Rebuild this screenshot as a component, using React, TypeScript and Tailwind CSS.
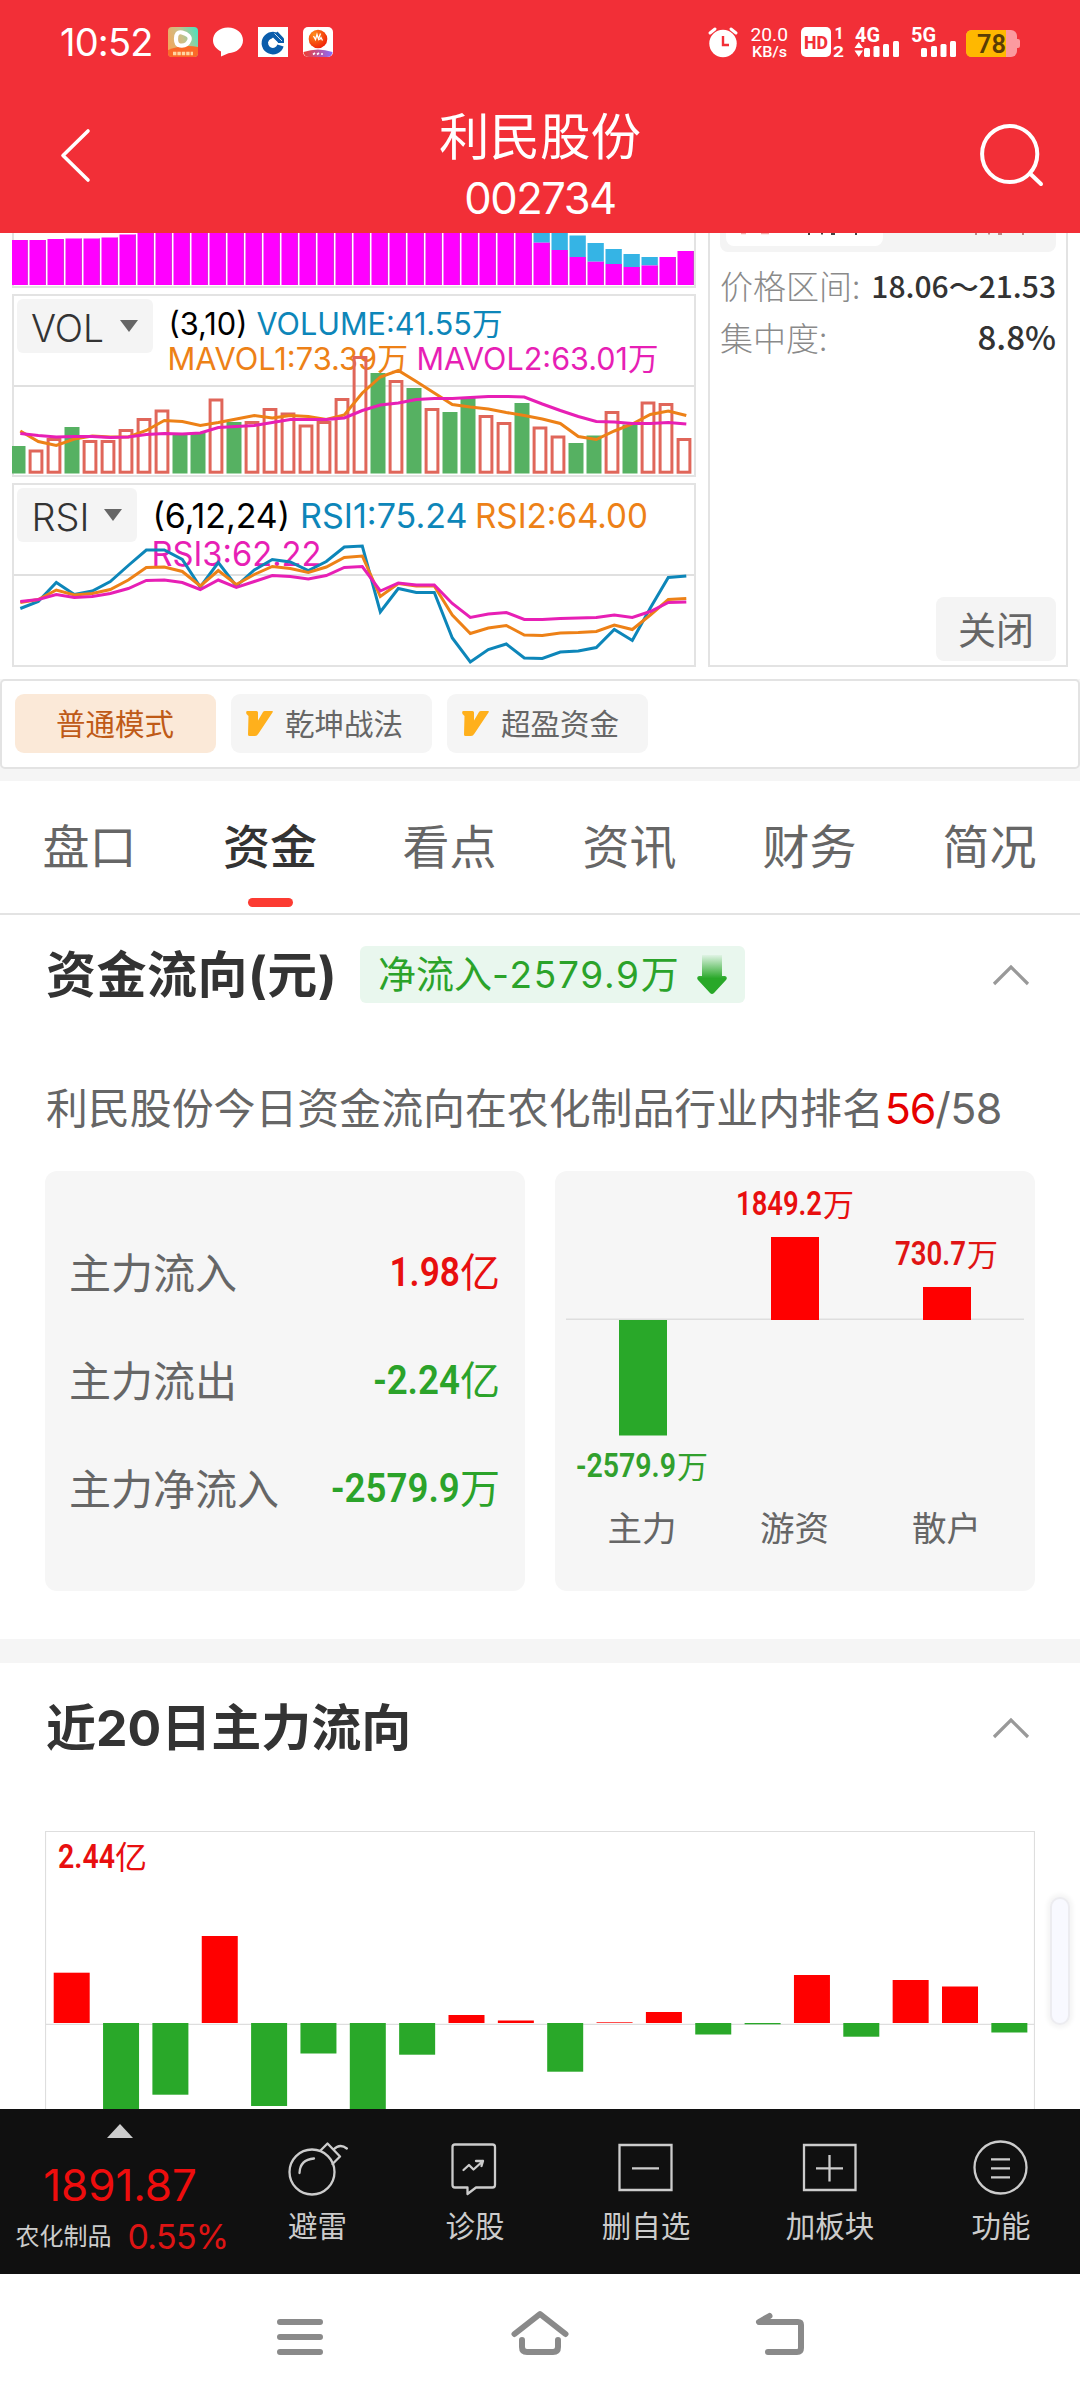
import React from "react";

const PITCH = 18;

/* Position chips histogram: [lower top, upper top] */
const CHIPS: [number, number?][] = [
  [240], [240], [239], [238.5], [238.5], [237.5], [234.5],
  ...Array.from({ length: 22 }, () => [230] as [number]),
  [242.7, 230], [250, 230], [257, 235.5], [261.7, 243], [264, 249], [267, 254], [265.5, 257], [257], [251],
];

const VOL_BARS: [string, number][] = [
  ["g", 446], ["r", 449.5], ["r", 438], ["g", 427], ["r", 440], ["r", 440], ["r", 429], ["r", 418], ["r", 409.5],
  ["g", 433], ["g", 432], ["r", 398.5], ["g", 422], ["r", 421], ["r", 408], ["r", 412.5], ["r", 424.5], ["r", 421],
  ["r", 398], ["r", 356], ["g", 373], ["r", 380], ["g", 388], ["r", 408], ["g", 412], ["g", 398], ["r", 415],
  ["r", 422], ["g", 403], ["r", 426.5], ["r", 435.5], ["g", 443], ["g", 435.5], ["r", 411], ["g", 424.5],
  ["r", 401.5], ["r", 403], ["r", 438],
];

const MA1 = [431, 441.5, 445.5, 439, 436, 437, 437, 430.5, 420.5, 421.5, 425.5, 422.5, 419, 415.5, 418, 415.5, 416.5, 419.5, 415, 393, 377, 370.5, 381.5, 393, 404.5, 407, 409, 412.5, 415.5, 419, 423.5, 436.5, 439.5, 431, 424, 414.5, 411, 415.5];
const MA2 = [433.5, 435.5, 437, 436.5, 436.5, 437.5, 437, 434.5, 433.5, 434, 433, 427.5, 426.5, 425.5, 422.5, 419.5, 419.5, 419.5, 418, 410.5, 405, 403, 399.5, 398.5, 398.5, 397.5, 396.5, 396.5, 397, 404, 410.5, 416.5, 421.5, 422, 423.5, 423.5, 422.5, 424];
const RSI1 = [608.5, 601.5, 582.5, 594.5, 591, 581.5, 565.5, 550, 550, 559.5, 587, 562.5, 586, 570, 559.5, 562, 570.5, 561.5, 547, 546, 612, 588.5, 592.5, 592.5, 638, 662, 649.5, 644, 658, 658.5, 652, 651, 647.5, 629.5, 640.5, 608, 577.5, 576];
const RSI2 = [602.5, 599.5, 590, 595, 593.5, 589.5, 580, 567.5, 567, 571.5, 586, 570.5, 584.5, 574.5, 566.5, 568.5, 572.5, 567, 557.5, 556, 596.5, 583.5, 586, 586, 615, 633.5, 628, 625.5, 635, 635.5, 633, 632.5, 631.5, 625, 629.5, 615, 599.5, 598.5];
const RSI3 = [601.5, 599.5, 594.5, 597.5, 596.5, 593.5, 588.5, 580.5, 580, 582.5, 589.5, 580, 587.5, 581.5, 575.5, 576.5, 579, 575.5, 567.5, 566.5, 591, 583, 585, 585, 603.5, 617.5, 614, 612.5, 619.5, 619.5, 618.5, 618, 617.5, 615, 617.5, 611.5, 602.5, 602];

const line = (ys: number[]) => ys.map((y, i) => `${20.3 + i * PITCH},${y}`).join(" ");

const BLUE = "#0d86b9";
const ORANGE = "#ed8117";
const PINK = "#e71fb5";

function StatusBar() {
  return (
    <div className="flex h-[84px] items-center pl-[60px] pr-[60px]">
      <span className="w-[108px] text-[38px] leading-none tracking-[-0.8px] text-white">10:52</span>
      <div className="flex gap-[15px]">
        <svg width="30" height="30" viewBox="0 0 30 30">
          <defs>
            <linearGradient id="vid" x1="0" y1="0.6" x2="1" y2="0.2">
              <stop offset="0" stopColor="#f3a85c" />
              <stop offset="0.5" stopColor="#c9c08a" />
              <stop offset="1" stopColor="#4fe0bd" />
            </linearGradient>
          </defs>
          <rect width="30" height="30" rx="4" fill="url(#vid)" />
          <path d="M0 23Q15 17 30 20V26Q30 30 26 30H4Q0 30 0 26Z" fill="#fb6a28" />
          <path d="M8 12Q8 4 14 5.5Q23 8 21.5 13Q19 19.5 12 18.5Q8 18 8 12Z" fill="none" stroke="#fff" strokeWidth="4.2" />
          <path d="M5 26.5H25" stroke="#ffd6a0" strokeWidth="3.4" strokeDasharray="3.4 1" />
        </svg>
        <svg width="30" height="30" viewBox="0 0 30 30">
          <path d="M15 0.5C23.5 0.5 30 6 30 13.3S23.5 26 15.5 26.2L8 29.6V24.4C3 22 0 18 0 13.3C0 6 6.5 0.5 15 0.5Z" fill="#fff" />
        </svg>
        <svg width="30" height="30" viewBox="0 0 30 30">
          <rect width="30" height="30" fill="#fff" />
          <path d="M20 10A8 8 0 1 0 22.500 18.500" fill="none" stroke="#0a5cab" strokeWidth="6.500" />
          <path d="M14 10.500L19.500 4.500L26 11.500V16H20Z" fill="#0a5cab" />
          <path d="M15 10.500L20 15.500L15 20.500L10 15.500Z" fill="#fff" />
          <path d="M16.500 6.500L24 14" stroke="#fff" strokeWidth="0.800" />
        </svg>
        <svg width="30" height="30" viewBox="0 0 30 30">
          <defs>
            <radialGradient id="ball" cx="0.3" cy="0.25" r="0.9">
              <stop offset="0" stopColor="#ff8c1a" />
              <stop offset="1" stopColor="#ee1505" />
            </radialGradient>
            <linearGradient id="rib">
              <stop offset="0" stopColor="#f03b2e" />
              <stop offset="1" stopColor="#8a6cff" />
            </linearGradient>
          </defs>
          <rect width="30" height="30" rx="5" fill="#fff" />
          <circle cx="15" cy="12" r="9.3" fill="url(#ball)" />
          <path d="M0.5 25Q15 20 29.5 25Q29 30 24 30H6Q1 30 0.5 25Z" fill="url(#rib)" />
          <path d="M10.5 9L12.5 12.5L14 7.5L15.5 12L17.5 6.5M16.5 13L18 10.500L19.500 13.500" fill="none" stroke="#fff" strokeWidth="1.3" />
          <path d="M10 27.500L12 26M14 27.500L16 26M18 27L20 27" stroke="#fff" strokeWidth="1.6" />
        </svg>
      </div>
      <svg className="ml-auto" width="314" height="54" viewBox="706 15 314 54" fontFamily='Roboto, "Noto Sans CJK SC", sans-serif' fill="#fff">
        <circle cx="723" cy="43.500" r="13.700" />
        <path d="M710 33L715 29M736 33L731 29" stroke="#fff" strokeWidth="3" strokeLinecap="round" />
        <path d="M723 36V45H729" fill="none" stroke="#f22f37" strokeWidth="2.400" />
        <text x="750.500" y="41" fontSize="19" textLength="37.500" lengthAdjust="spacingAndGlyphs">20.0</text>
        <text x="752" y="56.500" fontSize="15.500" fontWeight="500" textLength="35" lengthAdjust="spacingAndGlyphs">KB/s</text>
        <rect x="801" y="27" width="30" height="30" rx="5" />
        <text x="804" y="49" fontSize="19" fontWeight="800" fill="#f22f37" textLength="24" lengthAdjust="spacingAndGlyphs">HD</text>
        <text x="834.500" y="38.500" fontSize="16" fontWeight="700">1</text>
        <text x="833" y="57" fontSize="15.500" fontWeight="700" textLength="11" lengthAdjust="spacingAndGlyphs">2</text>
        <text x="855" y="42" fontSize="20" fontWeight="700" textLength="25" lengthAdjust="spacingAndGlyphs">4G</text>
        <path d="M854.500 48L858.800 42L863 48ZM854.500 50.500L858.800 57L863 50.500Z" />
        <rect x="864" y="48" width="6" height="9" rx="1.500" />
        <rect x="873.500" y="46" width="6" height="11" rx="1.500" />
        <rect x="883" y="44" width="6" height="13" rx="1.500" />
        <rect x="893" y="41" width="6" height="16" rx="1.500" />
        <text x="911" y="42" fontSize="20" fontWeight="700" textLength="25" lengthAdjust="spacingAndGlyphs">5G</text>
        <rect x="921" y="48" width="6" height="9" rx="1.500" />
        <rect x="931" y="46" width="6" height="11" rx="1.500" />
        <rect x="940.500" y="44" width="6" height="13" rx="1.500" />
        <rect x="950" y="41" width="6" height="16" rx="1.500" />
        <rect x="966" y="30" width="51" height="27" rx="6" fill="#fb9a9f" />
        <rect x="1015" y="39" width="5" height="9" rx="2" fill="#fb9a9f" />
        <path d="M972 30H1006V57H972Q966 57 966 51V36Q966 30 972 30Z" fill="#ffb800" />
        <text x="977" y="53" fontSize="25" fontWeight="600" fill="#5a3d05" textLength="29" lengthAdjust="spacingAndGlyphs">78</text>
      </svg>
    </div>
  );
}

function Header() {
  return (
    <header className="h-[233px] bg-[#f22f37]">
      <StatusBar />
      <div className="grid h-[149px] grid-cols-3">
        <svg className="ml-[34px] mt-[40px]" width="60" height="64" viewBox="34 124 60 64">
          <path d="M88 131L63 155.500L88 180" fill="none" stroke="#fff" strokeWidth="3.600" strokeLinecap="round" strokeLinejoin="round" />
        </svg>
        <div className="flex flex-col items-center text-white">
          <h1 className="mt-[28px] text-[50.500px] leading-[50px]">利民股份</h1>
          <p className="mt-[11px] text-[43.500px] leading-[50px] tracking-[-1.500px]">002734</p>
        </div>
        <svg className="ml-auto mr-[28px] mt-[40px]" width="76" height="66" viewBox="976 124 76 66">
          <ellipse cx="1009.700" cy="154" rx="27.600" ry="28" fill="none" stroke="#fff" strokeWidth="4" />
          <path d="M1030 173.500L1041 184" stroke="#fff" strokeWidth="4" strokeLinecap="round" />
        </svg>
      </div>
    </header>
  );
}

function IndicatorCharts() {
  return (
    <svg className="shrink-0" width="708" height="446" viewBox="0 233 708 446" fontFamily='Inter, "Noto Sans CJK SC", sans-serif'>
      <path d="M13 233V287H695V233" fill="none" stroke="#e3e3e3" strokeWidth="2" />
      {CHIPS.map(([lo, hi], i) => {
        const x = Math.max(12, 11.500 + i * PITCH);
        const w = i === 0 ? 15.700 : 16.300;
        return (
          <g key={i}>
            {hi !== undefined && <rect x={x} y={hi} width={w} height={lo - hi} fill="#35b4e5" />}
            <rect x={x} y={lo} width={w} height={285 - lo} fill="#ff00ff" />
            <path d={`M${x + w - 0.400} ${Math.max(lo, 233)}V285`} stroke="#c934c9" strokeWidth="0.800" />
          </g>
        );
      })}

      <rect x="13" y="295" width="682" height="181" fill="none" stroke="#e3e3e3" strokeWidth="2" />
      <path d="M14 386H694" stroke="#e0e0e0" strokeWidth="2" />
      <rect x="17" y="299" width="136" height="54" rx="6" fill="#f4f4f4" />
      <text x="31" y="341.500" fontSize="37.500" fontWeight="300" fill="#333" textLength="73" lengthAdjust="spacingAndGlyphs">VOL</text>
      <path d="M120 320H138L129 332Z" fill="#666" />
      <g fontSize="31">
        <text x="168.500" y="335" fill="#000" textLength="79" lengthAdjust="spacingAndGlyphs">(3,10)</text>
        <text x="256.500" y="335" fill={BLUE} textLength="246" lengthAdjust="spacingAndGlyphs">VOLUME:41.55万</text>
        <text x="167.500" y="370" fill={ORANGE} textLength="240.500" lengthAdjust="spacingAndGlyphs">MAVOL1:73.39万</text>
        <text x="416.500" y="370" fill={PINK} textLength="242" lengthAdjust="spacingAndGlyphs">MAVOL2:63.01万</text>
      </g>
      {VOL_BARS.map(([c, y], i) => {
        const x = 28.500 + (i - 1) * PITCH;
        if (c === "g") {
          const left = Math.max(12, x);
          return <rect key={i} x={left} y={y} width={x + 15 - left} height={473.500 - y} fill="#56b162" />;
        }
        return <rect key={i} x={x + 1.600} y={y + 1.500} width="11.800" height={470.700 - y} fill="none" stroke="#e0665a" strokeWidth="3" />;
      })}
      <polyline points={line(MA1)} fill="none" stroke={ORANGE} strokeWidth="3" />
      <polyline points={line(MA2)} fill="none" stroke={PINK} strokeWidth="3" />

      <rect x="13" y="484" width="682" height="182" fill="none" stroke="#e3e3e3" strokeWidth="2" />
      <path d="M14 575H694" stroke="#e0e0e0" strokeWidth="2" />
      <rect x="17" y="488" width="120" height="54" rx="6" fill="#f4f4f4" />
      <text x="31.500" y="530.500" fontSize="37.500" fontWeight="300" fill="#333" textLength="58" lengthAdjust="spacingAndGlyphs">RSI</text>
      <path d="M104 509H122L113 521Z" fill="#666" />
      <g fontSize="33.500">
        <text x="152.500" y="527.500" fill="#000" textLength="137.500" lengthAdjust="spacingAndGlyphs">(6,12,24)</text>
        <text x="300" y="527.500" fill={BLUE} textLength="167.500" lengthAdjust="spacingAndGlyphs">RSI1:75.24</text>
        <text x="475" y="527.500" fill={ORANGE} textLength="173" lengthAdjust="spacingAndGlyphs">RSI2:64.00</text>
        <text x="151.500" y="566" fill={PINK} textLength="170" lengthAdjust="spacingAndGlyphs">RSI3:62.22</text>
      </g>
      <polyline points={line(RSI1)} fill="none" stroke={BLUE} strokeWidth="3" />
      <polyline points={line(RSI2)} fill="none" stroke={ORANGE} strokeWidth="3" />
      <polyline points={line(RSI3)} fill="none" stroke={PINK} strokeWidth="3" />
    </svg>
  );
}

function ChipPanel() {
  return (
    <aside className="flex h-[434px] w-[360px] flex-col border-x-2 border-b-2 border-[#e3e3e3] px-[10px] font-['Noto_Sans_CJK_SC',sans-serif]">
      <div className="h-[19px] rounded-b-[8px] bg-[#f4f4f4] px-[6px]">
        <div className="h-[13px] w-[157px] rounded-b-[8px] bg-white">
          <svg width="310" height="3" viewBox="0 0 310 3">
            <path d="M15 0.500H20M35 0.500H43" stroke="#f0b0b0" strokeWidth="1.500" />
            <path d="M82 1H84M95 0.500H97M105 1H109M129 1H131" stroke="#444" strokeWidth="2" />
            <path d="M249 1H251M262 0.500H264M272 1H276M296 1H298" stroke="#b88" strokeWidth="2" />
          </svg>
        </div>
      </div>
      <div className="mt-[10px] flex h-[48px] items-center justify-between whitespace-nowrap">
        <span className="text-[33px] font-light text-[#8a8a8a]">价格区间:</span>
        <span className="-mt-[2px] text-[30px] font-medium text-[#333]">18.06～21.53</span>
      </div>
      <div className="mt-[4px] flex h-[48px] items-center justify-between">
        <span className="text-[33px] font-light text-[#8a8a8a]">集中度:</span>
        <span className="-mt-[2px] text-[33px] font-medium text-[#333]">8.8%</span>
      </div>
      <button className="mb-[4px] ml-auto mt-auto h-[64px] w-[120px] rounded-[8px] bg-[#f4f4f4] pb-[2px] text-[38px] leading-none text-[#666]">关闭</button>
    </aside>
  );
}

function VipIcon() {
  return (
    <svg width="27" height="25" viewBox="0 0 27 25">
      <path d="M1.500 0H10.500Q12 0 12 1.500V9.500L17 1Q17.600 0 19 0H26Q27.500 0 26.500 1.500L12.500 22.500Q11 25 9 25H3.500Q2 25 2 23.500L2.500 5L0.500 3Q-0.500 0 1.500 0Z" fill="#ffb01c" />
    </svg>
  );
}

function ModeBar() {
  return (
    <div className="bg-[#f5f5f5] pb-[12px]">
      <div className="flex h-[90px] gap-[15px] rounded-[5px] border-2 border-[#e3e3e3] bg-white px-[13px] pt-[13px] text-[29.500px]">
        <button className="h-[59px] w-[201px] rounded-[9px] bg-[#fbe9d8] pr-[1px] pt-[2px] text-[#bf5a17]">普通模式</button>
        {["乾坤战法", "超盈资金"].map((t) => (
          <button key={t} className="flex h-[59px] w-[201px] items-center gap-[12px] rounded-[9px] bg-[#f5f5f5] pl-[15px] text-[#666]">
            <VipIcon />
            <span className="pt-[2px]">{t}</span>
          </button>
        ))}
      </div>
    </div>
  );
}

const TABS = ["盘口", "资金", "看点", "资讯", "财务", "简况"];

function Tabs() {
  return (
    <nav className="grid h-[134px] grid-cols-6 border-b-2 border-[#e3e3e3]">
      {TABS.map((t) =>
        t === "资金" ? (
          <div key={t} className="flex flex-col items-center">
            <span className="mt-[31px] text-[47px] font-medium leading-[70px] text-[#333]">{t}</span>
            <span className="mt-[16px] h-[9px] w-[45px] rounded-[5px] bg-[#fc3b32]" />
          </div>
        ) : (
          <div key={t} className="flex flex-col items-center pr-px">
            <span className="mt-[31px] text-[47px] leading-[70px] text-[#666]">{t}</span>
          </div>
        ),
      )}
    </nav>
  );
}

function Collapse() {
  return (
    <svg className="ml-auto" width="38" height="22" viewBox="0 0 38 22">
      <path d="M2 20L19 3L36 20" fill="none" stroke="#999" strokeWidth="3.200" />
    </svg>
  );
}

function FlowRow({ label, digits, unit, tone }: { label: string; digits: string; unit: string; tone: "up" | "down" }) {
  return (
    <div className="flex h-[108px] items-center justify-between">
      <span className="text-[42px] text-[#666]">{label}</span>
      <span className={tone === "up" ? "flex items-center text-[#e80f0f]" : "flex items-center text-[#2ba32a]"}>
        <span
          className={
            tone === "up"
              ? "inline-block origin-right scale-x-[0.86] font-['Roboto'] text-[41px] font-semibold"
              : "inline-block origin-right scale-x-[0.895] font-['Roboto'] text-[41px] font-semibold"
          }
        >
          {digits}
        </span>
        <span className="text-[40px]">{unit}</span>
      </span>
    </div>
  );
}

function MoneySplit() {
  const bars = [
    { x: 619, y: 1320, h: 115.500, fill: "#29a829", text: "#31a02d", name: "主力", digits: "-2579.9", dx: 576, dw: 100, dy: 1477, nx: 642 },
    { x: 771, y: 1237, h: 83, fill: "#ff0000", text: "#e80f0f", name: "游资", digits: "1849.2", dx: 736, dw: 86, dy: 1215, nx: 794.500 },
    { x: 923, y: 1287, h: 33, fill: "#ff0000", text: "#e01414", name: "散户", digits: "730.7", dx: 895, dw: 71, dy: 1265, nx: 946.500 },
  ];
  return (
    <svg className="rounded-[12px] bg-[#f6f6f6]" width="480" height="420" viewBox="555 1171 480 420" fontFamily='Roboto, "Noto Sans CJK SC", sans-serif'>
      <path d="M566 1319.300H1024" stroke="#dedede" strokeWidth="1.500" />
      {bars.map((b) => (
        <g key={b.name}>
          <rect x={b.x} y={b.y} width="48" height={b.h} fill={b.fill} />
          <text x={b.dx} y={b.dy} fontSize="34" fontWeight="600" fill={b.text} textLength={b.dw} lengthAdjust="spacingAndGlyphs">{b.digits}</text>
          <text x={b.dx + b.dw + 1} y={b.dy + 0.500} fontSize="31" fill={b.text}>万</text>
          <text x={b.nx} y="1540.500" fontSize="34.500" fill="#666" textAnchor="middle">{b.name}</text>
        </g>
      ))}
    </svg>
  );
}

function MoneyFlow() {
  return (
    <section className="h-[724px] px-[45px]">
      <div className="flex h-[119px] items-center pl-px pr-[5px]">
        <h2 className="w-[288px] whitespace-nowrap text-[50px] font-bold leading-[60px] tracking-[0.500px] text-[#333]">资金流向(元)</h2>
        <div className="ml-[26px] flex h-[57px] w-[385px] items-center rounded-[6px] bg-[#e9f7ee] pl-[18px] text-[#2ba32a]">
          <span className="-mt-[2px] whitespace-nowrap text-[38px] leading-none">
            净流入<span className="font-['Inter'] text-[37px] tracking-[1.700px]">-2579.9</span>万
          </span>
          <svg className="ml-auto mr-[18px]" width="30" height="40" viewBox="0 0 30 40">
            <defs>
              <linearGradient id="fall" x1="0" y1="0" x2="0" y2="1">
                <stop offset="0" stopColor="#29a829" stopOpacity="0.050" />
                <stop offset="0.600" stopColor="#29a829" />
              </linearGradient>
            </defs>
            <path d="M5 0H25V21H28Q31 22 29 25L17 38Q15 40 13 38L1 25Q-1 22 2 21H5Z" fill="url(#fall)" />
          </svg>
        </div>
        <Collapse />
      </div>
      <p className="mt-[44px] flex h-[60px] items-baseline whitespace-nowrap pl-px text-[41.900px] leading-[60px] text-[#666]">
        利民股份今日资金流向在农化制品行业内排名
        <span className="pl-px font-['Inter'] text-[43px] tracking-[-1.200px] text-[#e60000]">56</span>
        <span className="font-['Inter'] text-[43px] tracking-[-0.500px]">/58</span>
      </p>
      <div className="mt-[33px] flex gap-[30px]">
        <div className="h-[420px] w-[480px] rounded-[12px] bg-[#f6f6f6] pl-[24px] pr-[25px] pt-[48px]">
          <FlowRow label="主力流入" digits="1.98" unit="亿" tone="up" />
          <FlowRow label="主力流出" digits="-2.24" unit="亿" tone="down" />
          <FlowRow label="主力净流入" digits="-2579.9" unit="万" tone="down" />
        </div>
        <MoneySplit />
      </div>
    </section>
  );
}

/* End of each daily bar, measured from the zero line at 2023 */
const DAILY = [1972.700, 2120, 2094.700, 1936, 2106, 2053.500, 2120, 2054.700, 2015, 2020.500, 2071.700, 2022.300, 2012, 2034.500, 2024.300, 1975, 2036.700, 1980, 1986.500, 2032.500];

function DailyFlow() {
  return (
    <section className="relative h-[446px] overflow-hidden">
      <div className="flex h-[130px] items-center pl-[46px] pr-[50px]">
        <h2 className="text-[50px] font-bold leading-[60px] text-[#333]">近20日主力流向</h2>
        <Collapse />
      </div>
      <svg className="ml-[45px] mt-[38px]" width="990" height="278" viewBox="45 1831 990 278" fontFamily='Roboto, "Noto Sans CJK SC", sans-serif'>
        <path d="M45.500 2109V1831.500H1034.500V2109M46 2024.300H1034" fill="none" stroke="#dedede" strokeWidth="1.200" />
        <text x="58" y="1868" fontSize="34" fontWeight="600" fill="#e80f0f" textLength="57" lengthAdjust="spacingAndGlyphs">2.44</text>
        <text x="115" y="1868.500" fontSize="32" fill="#e80f0f">亿</text>
        {DAILY.map((y, i) => (
          <rect key={i} x={53.700 + i * 49.350} y={Math.min(y, 2023)} width="36" height={Math.abs(y - 2023)} fill={y < 2023 ? "#ff0000" : "#29a829"} />
        ))}
      </svg>
      <div className="absolute left-[1050px] top-[234px] h-[128px] w-[20px] rounded-full border-2 border-[#ececf0] bg-[#f8f9ff] shadow-[0_0_4px_3px_#f5f5f5]" />
    </section>
  );
}

function ActionBar() {
  const item = "flex flex-col items-center pt-[27px] text-[29.500px] leading-[40px] text-[#ccc]";
  return (
    <footer className="flex h-[165px] bg-[#101010]">
      <div className="flex w-[240px] flex-col items-center">
        <svg className="mt-[15px]" width="26" height="14" viewBox="0 0 26 14">
          <path d="M13 0L26 14H0Z" fill="#ccc" />
        </svg>
        <span className="mt-[22px] font-['Inter'] text-[44px] leading-[50px] tracking-[-0.100px] text-[#ee0d0d]">1891.87</span>
        <span className="ml-[4px] mt-[3px] flex items-center gap-[16px]">
          <span className="text-[24px] leading-[48px] text-[#ccc]">农化制品</span>
          <span className="font-['Inter'] text-[34px] leading-[48px] tracking-[-0.700px] text-[#dd1414]">0.55%</span>
        </span>
      </div>
      <div className={`${item} w-[154px]`}>
        <svg width="62" height="64" viewBox="286 2136 62 64" fill="none" stroke="#ccc" strokeWidth="2.300" strokeLinejoin="round" strokeLinecap="round">
          <circle cx="312" cy="2172" r="22.500" />
          <path d="M320 2151L327.500 2143.500L340 2156.500L332.500 2164M333.500 2149.500Q340 2143 346.800 2148.500M299.500 2173Q300 2159.500 314 2158.500" />
        </svg>
        <span className="ml-px mt-[6px]">避雷</span>
      </div>
      <div className={`${item} w-[162px]`}>
        <svg width="62" height="64" viewBox="444 2136 62 64" fill="none" stroke="#ccc" strokeWidth="2.300" strokeLinejoin="round" strokeLinecap="round">
          <path d="M455 2144.500H492.500Q495 2144.500 495 2147V2185Q495 2187.500 492.500 2187.500H476L467.500 2194V2187.500H455Q452.500 2187.500 452.500 2185V2147Q452.500 2144.500 455 2144.500Z" />
          <path d="M463.500 2170L469 2165L473.500 2169.500L483 2161M476 2161H483L481.500 2166" />
        </svg>
        <span className="mt-[6px]">诊股</span>
      </div>
      <div className={`${item} w-[180px]`}>
        <svg width="62" height="64" viewBox="615 2136 62 64" fill="none" stroke="#ccc" strokeWidth="2.300">
          <path d="M619.500 2145H671.500V2190H619.500ZM632 2168.300H659" />
        </svg>
        <span className="mt-[6px]">删自选</span>
      </div>
      <div className={`${item} w-[188px]`}>
        <svg width="62" height="64" viewBox="799 2136 62 64" fill="none" stroke="#ccc" strokeWidth="2.300">
          <path d="M804 2145H855.500V2190H804ZM816 2168.300H843M829.500 2155V2181.500" />
        </svg>
        <span className="mt-[6px]">加板块</span>
      </div>
      <div className={`${item} w-[154px]`}>
        <svg width="62" height="64" viewBox="970 2136 62 64" fill="none" stroke="#ccc" strokeWidth="2.300">
          <circle cx="1000.500" cy="2167.500" r="26" />
          <path d="M991 2159.300H1010M991 2168.300H1010M991 2177.300H1010" />
        </svg>
        <span className="mt-[6px]">功能</span>
      </div>
    </footer>
  );
}

function SystemNav() {
  return (
    <div className="flex h-[126px] justify-center gap-[180px] pt-[33px]">
      <svg width="60" height="60" viewBox="270 2307 60 60" fill="none" stroke="#8a8a8a" strokeWidth="6" strokeLinecap="round">
        <path d="M280 2322H320M280 2337H320M280 2352H320" />
      </svg>
      <svg width="60" height="60" viewBox="510 2307 60 60" fill="none" stroke="#8a8a8a" strokeWidth="6" strokeLinecap="round" strokeLinejoin="round">
        <path d="M514.500 2334L540 2314L565.500 2334M522 2340V2347Q522 2352 527 2352H553Q558 2352 558 2347V2340" />
      </svg>
      <svg width="60" height="60" viewBox="750 2307 60 60" fill="none" stroke="#8a8a8a" strokeWidth="6" strokeLinecap="round" strokeLinejoin="round">
        <path d="M769.500 2316L759 2322H798Q801 2322 801 2325V2348Q801 2352 797 2352H768" />
      </svg>
    </div>
  );
}

export default function App() {
  return (
    <div className="h-[2400px] w-[1080px] overflow-hidden bg-white font-['Inter','Noto_Sans_CJK_SC',sans-serif]">
      <Header />
      <div className="flex h-[446px]">
        <IndicatorCharts />
        <ChipPanel />
      </div>
      <ModeBar />
      <Tabs />
      <MoneyFlow />
      <div className="h-[24px] bg-[#f5f5f5]" />
      <DailyFlow />
      <ActionBar />
      <SystemNav />
    </div>
  );
}
